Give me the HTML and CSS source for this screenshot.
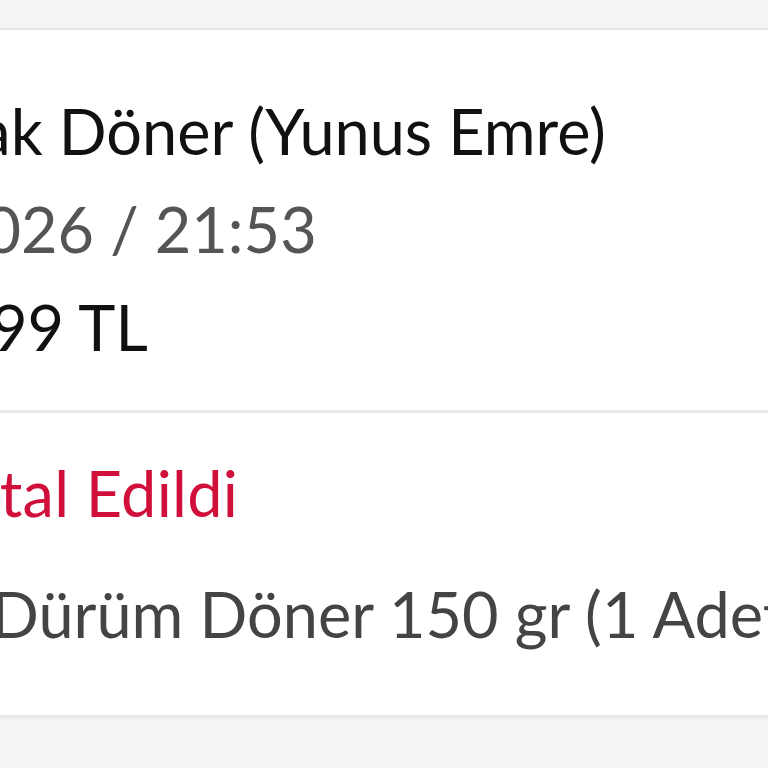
FILE: index.html
```html
<!DOCTYPE html>
<html lang="tr">
<head>
<meta charset="utf-8">
<link rel="stylesheet" href="styles.css">
</head>
<body>
<div class="page">
  <div class="top-band"></div>
  <div class="card">
    <div class="section info">
      <div class="line title"><span class="pre">Bıçak </span>Döner (Yunus Emre)</div>
      <div class="line date"><span class="pre">14.01.2</span>026 / 21:53</div>
      <div class="line price"><span class="pre">349,</span>99 TL</div>
    </div>
    <div class="section order">
      <div class="line status"><span class="pre">İp</span>tal Edildi</div>
      <div class="line item">Dürüm Döner 150 gr (1 Adet)</div>
    </div>
  </div>
  <div class="bottom-band"></div>
</div>
</body>
</html>
```
FILE: styles.css
```css
html, body {
  margin: 0;
  padding: 0;
  background: #f4f4f4;
  overflow: hidden;
}
.page {
  width: 768px;
  height: 768px;
  display: flex;
  flex-direction: column;
  font-family: Lato, "Open Sans", sans-serif;
  overflow: hidden;
}
.top-band {
  height: 28px;
  background: #f4f4f4;
  border-bottom: 2px solid #e6e6e6;
  flex: none;
}
.card {
  background: #fff;
  display: flex;
  flex-direction: column;
  flex: none;
}
.section {
  display: flex;
  flex-direction: column;
  white-space: nowrap;
}
.info {
  height: 380px;
  border-bottom: 3px solid #e8e8e8;
}
.order {
  height: 302px;
  border-bottom: 3px solid #e8e8e8;
}
.line {
  font-size: 63px;
  line-height: 98px;
}
.title { color: #111; margin-top: 52px; margin-left: -106px; }
.date { color: #555; margin-left: -228px; }
.price { color: #111; margin-left: -133px; }
.status { color: #d0103a; margin-top: 31px; margin-left: -53px; letter-spacing: 0.3px; }
.item { color: #444; margin-top: 23px; margin-left: -9px; }
.bottom-band {
  flex: 1;
  background: #f4f4f4;
}
```
